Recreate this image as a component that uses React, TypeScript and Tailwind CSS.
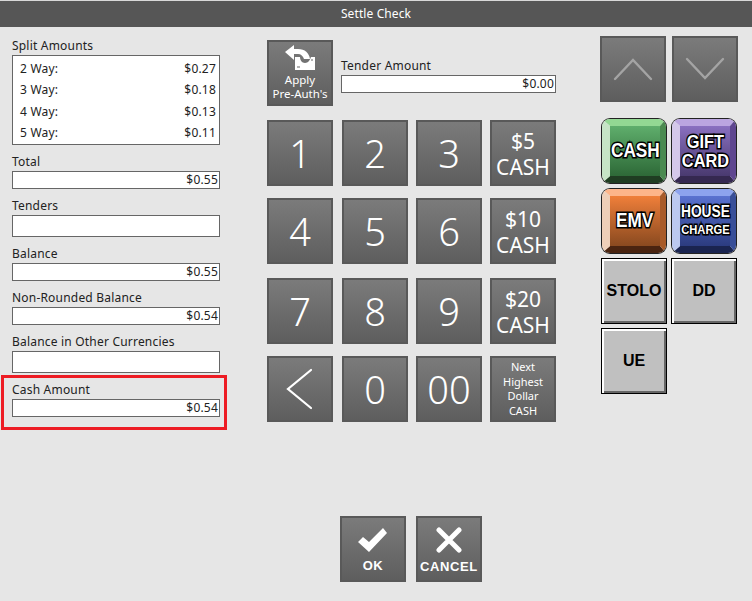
const sans = "font-['Noto_Sans','DejaVu_Sans',sans-serif]"

const Field = ({ label, value, tall }: { label: string; value?: string; tall?: boolean }) => (
    <div className="tracking-[0.2px]">
        <div className="h-[16px] text-[12px] leading-[14px] text-[#222]">{label}</div>
        <div
            className={`${tall ? 'h-[22px]' : 'h-[18px]'} flex items-center justify-end border border-[#666] bg-white pr-[1px] text-[12px] text-[#222]`}
        >
            {value}
        </div>
    </div>
)

const Tile = ({ children, className = '' }: { children: React.ReactNode; className?: string }) => (
    <div
        className={`flex h-[66px] w-[66px] shrink-0 flex-col items-center justify-center border-2 border-[#595959] bg-gradient-to-b from-[#7b7b7b] to-[#5e5e5e] text-center text-white ${className}`}
    >
        {children}
    </div>
)

const Cash = ({ top, className = '' }: { top: string; className?: string }) => (
    <Tile className={`pt-[2px] text-[21px] leading-[26px] ${className}`}>
        <span>{top}</span>
        <span>CASH</span>
    </Tile>
)

const Digit = ({ n, className = '' }: { n: string; className?: string }) => (
    <Tile className={`text-[38px] font-light ${className}`}>{n}</Tile>
)

const Colored = ({ children, className = '' }: { children: React.ReactNode; className?: string }) => (
    <div
        className={`m-[1px] flex h-[64px] w-[64px] items-center justify-center rounded-[8px] border-y-[7px] border-l-[8px] border-r-[6px] font-['Liberation_Sans',sans-serif] font-bold text-white shadow-[0_0_0_1px_#222] [-webkit-text-stroke:3px_#000] [paint-order:stroke_fill] ${className}`}
    >
        <div className="flex shrink-0 scale-x-[0.86] flex-col items-center">{children}</div>
    </div>
)

const Grey = ({ label }: { label: string }) => (
    <div className="flex h-[66px] w-[66px] items-center justify-center border border-black bg-[#c0c0c0] font-['Liberation_Sans',sans-serif] text-[16px] font-bold text-black shadow-[inset_2px_2px_0_#fff,inset_-2px_-2px_0_#666]">
        {label}
    </div>
)

const App = () => {
    return (
        <div className={`flex h-[601px] w-[752px] flex-col overflow-hidden bg-[#e6e6e6] ${sans}`}>
            <div className="flex h-[27px] shrink-0 items-center justify-center border-t border-[#d8d8d8] bg-[#565656] text-[12px] tracking-[0.1px] text-white">
                Settle Check
            </div>

            <div className="flex flex-1">
                {/* left column */}
                <div className="ml-[12px] flex w-[208px] flex-col pt-[11px]">
                    <div className="h-[17px] text-[12px] leading-[16px] tracking-[0.2px] text-[#222]">Split Amounts</div>
                    <div className="flex h-[90px] flex-col justify-around border border-[#666] bg-white pl-[7px] pr-[3px] pt-[2px] text-[12px] tracking-[0.2px] text-[#222]">
                        {[
                            ['2 Way:', '$0.27'],
                            ['3 Way:', '$0.18'],
                            ['4 Way:', '$0.13'],
                            ['5 Way:', '$0.11'],
                        ].map(([a, b]) => (
                            <div key={a} className="flex justify-between">
                                <span>{a}</span>
                                <span>{b}</span>
                            </div>
                        ))}
                    </div>
                    <div className="mt-[10px] flex flex-col gap-[10px]">
                        <Field label="Total" value="$0.55" />
                        <Field label="Tenders" tall />
                        <Field label="Balance" value="$0.55" />
                        <Field label="Non-Rounded Balance" value="$0.54" />
                        <Field label="Balance in Other Currencies" tall />
                    </div>
                    <div className="ml-[-11px] mt-[2px] h-[55px] w-[226px] border-[3px] border-[#ed1c24] pl-[8px] pr-[4px] pt-[5px]">
                        <Field label="Cash Amount" value="$0.54" />
                    </div>
                </div>

                {/* keypad */}
                <div className="ml-[47px] flex w-[289px] flex-col pt-[13px]">
                    <div className="flex items-start">
                        <Tile className="text-[11.5px] leading-[14px]">
                            <svg viewBox="0 0 31 26" className="mb-[2px] h-[26px] w-[31px]" fill="#fff">
                                <path d="M0 7 9 0v4h4c7 0 11 4 12 10h-6c-1-3-3-5-6-5H9v6z" />
                                <path d="M10 12h5c0 3 2 6 5 6s5-3 6-6h4v13H10z" />
                                <path d="M12 22h3M26 15h2" stroke="#666" />
                            </svg>
                            <span>Apply</span>
                            <span>Pre-Auth's</span>
                        </Tile>
                        <div className="ml-[8px] mt-[19px] w-[215px]">
                            <Field label="Tender Amount" value="$0.00" />
                        </div>
                    </div>
                    <div className="mt-[14px] flex">
                        <Digit n="1" />
                        <Digit n="2" className="ml-[9px]" />
                        <Digit n="3" className="ml-[8px]" />
                        <Cash top="$5" className="ml-[8px]" />
                    </div>
                    <div className="mt-[12px] flex">
                        <Digit n="4" />
                        <Digit n="5" className="ml-[9px]" />
                        <Digit n="6" className="ml-[8px]" />
                        <Cash top="$10" className="ml-[8px]" />
                    </div>
                    <div className="mt-[14px] flex">
                        <Digit n="7" />
                        <Digit n="8" className="ml-[9px]" />
                        <Digit n="9" className="ml-[8px]" />
                        <Cash top="$20" className="ml-[8px]" />
                    </div>
                    <div className="mt-[12px] flex">
                        <Tile>
                            <svg viewBox="0 0 30 42" className="h-[42px] w-[30px]" fill="none" stroke="#fff" strokeWidth="2.2" strokeLinecap="round">
                                <path d="M26 2 3 21l23 19" />
                            </svg>
                        </Tile>
                        <Digit n="0" className="ml-[9px]" />
                        <Digit n="00" className="ml-[8px]" />
                        <Tile className="ml-[8px] text-[11px] leading-[14.5px]">
                            <span>Next</span>
                            <span>Highest</span>
                            <span>Dollar</span>
                            <span>CASH</span>
                        </Tile>
                    </div>
                    <div className="ml-[73px] mt-[94px] flex gap-[10px]">
                        <Tile className="font-['Liberation_Sans',sans-serif] text-[13px] font-bold leading-[15px] tracking-[0.6px] text-[#e6e6e6]">
                            <svg viewBox="0 0 30 24" className="mb-[6px] mt-[2px] h-[24px] w-[30px]" fill="#fff">
                                <path d="M0 14 5 9l6 5L25 0l4 5-18 19z" />
                            </svg>
                            OK
                        </Tile>
                        <Tile className="font-['Liberation_Sans',sans-serif] text-[13px] font-bold leading-[15px] tracking-[0.6px] text-[#e6e6e6]">
                            <svg viewBox="0 0 26 26" className="mb-[6px] mt-[2px] h-[26px] w-[26px]" fill="none" stroke="#fff" strokeWidth="5" strokeLinecap="round">
                                <path d="M3 3l20 20M23 3 3 23" />
                            </svg>
                            CANCEL
                        </Tile>
                    </div>
                </div>

                {/* right column */}
                <div className="ml-[44px] flex flex-col pt-[9px]">
                    <div className="flex gap-[6px]">
                        <Tile>
                            <svg viewBox="0 0 40 24" className="h-[24px] w-[40px]" fill="none" stroke="#a4a4a4" strokeWidth="2.4" strokeLinecap="round">
                                <path d="M2 22 20 3l18 19" />
                            </svg>
                        </Tile>
                        <Tile>
                            <svg viewBox="0 0 40 24" className="h-[24px] w-[40px]" fill="none" stroke="#a4a4a4" strokeWidth="2.4" strokeLinecap="round">
                                <path d="M2 2l18 19L38 2" />
                            </svg>
                        </Tile>
                    </div>
                    <div className="ml-[1px] mt-[16px] grid w-[136px] grid-cols-[66px_66px] gap-[4px]">
                        <Colored className="border-t-[#93d893] border-l-[#c6e4c6] border-r-[#4a8a50] border-b-[#1f3d22] bg-gradient-to-b from-[#5fae6c] to-[#2e6a38] pb-[2px] text-[20px]">
                            CASH
                        </Colored>
                        <Colored className="border-t-[#bba5e0] border-l-[#d4c8ea] border-r-[#5f4690] border-b-[#352850] bg-gradient-to-b from-[#8a70c0] to-[#4a3a70] text-[19px] leading-[19px]">
                            <span>GIFT</span>
                            <span>CARD</span>
                        </Colored>
                        <Colored className="border-t-[#fdb58a] border-l-[#eecfb8] border-r-[#a85a28] border-b-[#4a2410] bg-gradient-to-b from-[#f07f3a] to-[#8a4a20] pb-[2px] text-[20px]">
                            EMV
                        </Colored>
                        <Colored className="border-t-[#8da3ee] border-l-[#bcc9f0] border-r-[#384e98] border-b-[#1a2450] bg-gradient-to-b from-[#5a72d0] to-[#2c3c80] text-[16px] leading-[18px]">
                            <span>HOUSE</span>
                            <span className="text-[13px]">CHARGE</span>
                        </Colored>
                        <Grey label="STOLO" />
                        <Grey label="DD" />
                        <Grey label="UE" />
                    </div>
                </div>
            </div>
        </div>
    )
}

export default App
